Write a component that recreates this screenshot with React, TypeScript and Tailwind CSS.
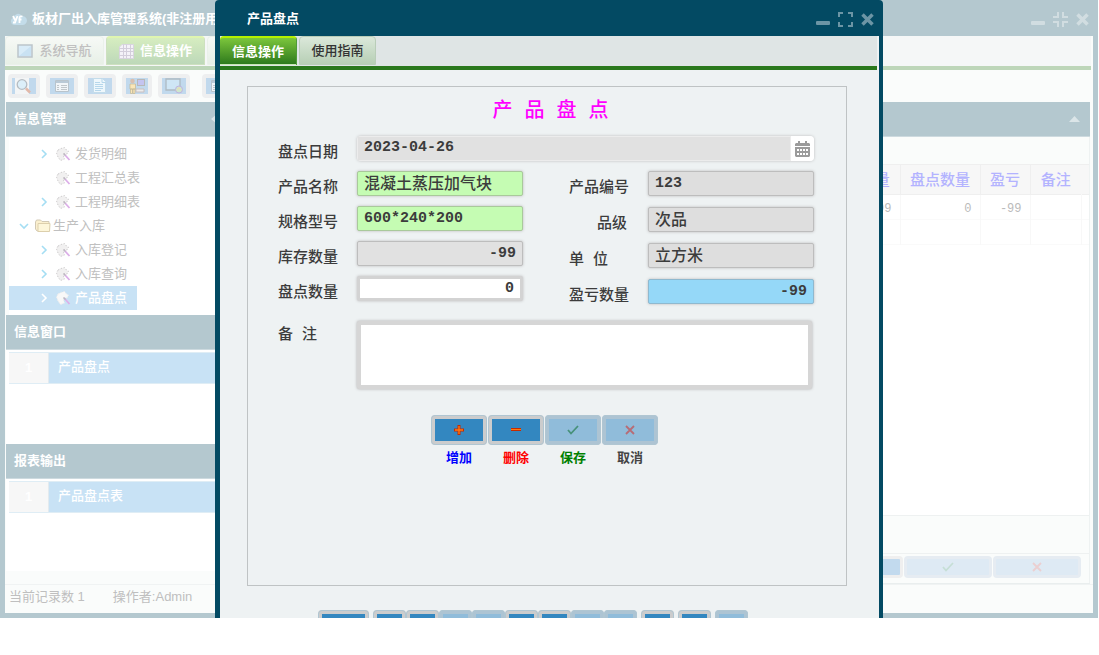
import type { ReactNode } from "react";

interface TreeItem {
  label: string;
  folder?: boolean;
  leaf?: boolean;
  active?: boolean;
}

interface NavButton {
  wide?: boolean;
  muted?: boolean;
  gap?: boolean;
  label: string;
}

const TREE: TreeItem[] = [
  { label: "发货明细" },
  { label: "工程汇总表", leaf: true },
  { label: "工程明细表" },
  { label: "生产入库", folder: true },
  { label: "入库登记" },
  { label: "入库查询" },
  { label: "产品盘点", active: true },
];

const NAV_BUTTONS: NavButton[] = [
  { label: "query", wide: true },
  { label: "first", gap: true },
  { label: "previous" },
  { label: "next", muted: true },
  { label: "last", muted: true },
  { label: "add" },
  { label: "delete" },
  { label: "save", muted: true },
  { label: "cancel", muted: true },
  { label: "print", gap: true },
  { label: "export", gap: true },
  { label: "close", gap: true, muted: true },
];

const SANS = "font-['Liberation_Sans','Noto_Sans_CJK_SC',sans-serif]";
const MONO = "font-['Liberation_Mono','Noto_Sans_CJK_SC',monospace]";

/* ---------- icons ---------- */

function MinimizeIcon() {
  return (
    <svg width="14" height="16" viewBox="0 0 14 16">
      <rect x="0" y="10" width="14" height="4" rx="1" fill="currentColor" />
    </svg>
  );
}

function MaximizeIcon() {
  return (
    <svg width="15" height="15" viewBox="0 0 15 15" fill="none" stroke="currentColor" strokeWidth="2">
      <path d="M1 5V1h4M10 1h4v4M14 10v4h-4M5 14H1v-4" />
    </svg>
  );
}

function RestoreIcon() {
  return (
    <svg width="15" height="15" viewBox="0 0 15 15" fill="none" stroke="currentColor" strokeWidth="2">
      <path d="M0 5h5V0M10 0v5h5M15 10h-5v5M5 15v-5H0" />
    </svg>
  );
}

function CloseIcon() {
  return (
    <svg width="13" height="13" viewBox="0 0 13 13" stroke="currentColor" strokeWidth="3.5">
      <path d="M1.5 1.5l10 10M11.5 1.5l-10 10" />
    </svg>
  );
}

function LogoIcon() {
  return (
    <svg width="17" height="14" viewBox="0 0 17 14">
      <path d="M4 13a4 4 0 0 1-.6-7.6A4.6 4.6 0 0 1 11.8 4 4.5 4.5 0 0 1 13 13z" fill="#c3dce9" />
      <path d="M3 4l2.300 4.500M7.500 4L5 10.500H3M9.500 11V6c0-1.500 1-2 3-1.500M8.500 7.500h3" fill="none" stroke="#fff" strokeWidth="1.8" />
    </svg>
  );
}

function ScreenIcon() {
  return (
    <svg width="16" height="14" viewBox="0 0 16 14">
      <rect x="1" y="1" width="14" height="12" fill="#d9ecf8" stroke="#bcc5ca" strokeWidth="1.5" />
      <path d="M2 12L14 2v10z" fill="#c9e2f3" />
    </svg>
  );
}

function GridIcon() {
  return (
    <svg width="15" height="15" viewBox="0 0 15 15">
      <path d="M3 .5h11.500v14H.5V3z" fill="#f4f2f8" stroke="#d9d5e0" />
      <path d="M.5 4.500h14M.5 7.500h14M.5 11.500h14M4.500 .5v14M7.500 .5v14M11.500 .5v14" stroke="#d3cedb" />
    </svg>
  );
}

function ToolIcon({ kind }: { kind: number }) {
  return (
    <svg width="18" height="16" viewBox="0 0 18 16" fill="none">
      {kind === 0 && (
        <>
          <path d="M0 0h14v16H0z" fill="#f3f5f6" />
          <circle cx="7" cy="6.500" r="4.800" fill="#dceff9" stroke="#b5bcc2" strokeWidth="1.3" />
          <path d="M11 10.500l4 4" stroke="#e2b8a8" strokeWidth="2.5" />
        </>
      )}
      {(kind === 1 || kind === 5) && (
        <>
          <path d="M2.500 2.500h13v11h-13z" fill="#f1f5f8" stroke="#b9c4cc" />
          <path d="M3 4h12" stroke="#b9c9d6" strokeWidth="2" />
          <path d="M4 7.500h2M4 9.500h2M4 11.500h2M8 7.500h6M8 9.500h6M8 11.500h6" stroke="#c0c6ca" />
        </>
      )}
      {kind === 2 && (
        <>
          <path d="M2.500 .5h9l3 3v11h-12z" fill="#eef7fc" stroke="#c3dcea" />
          <path d="M11 .5v4h3.500M4 4.500h5M4 6.500h8M4 8.500h8M4 10.500h8M4 12.500h6" stroke="#b6d7eb" />
        </>
      )}
      {kind === 3 && (
        <>
          <rect x="9.500" y="1.500" width="7" height="6" fill="#c4c4f0" stroke="#b8b8b8" />
          <path d="M8 11h8v3H8z" fill="#ececec" stroke="#c9bfc0" />
          <circle cx="4.500" cy="3" r="2.300" fill="#d8bfb0" />
          <path d="M2 6h5.500v5H2zM2.500 11h2v4.500h-2zM5 11h2v4.500H5z" fill="#fae6b7" stroke="#c3b896" strokeWidth=".7" />
        </>
      )}
      {kind === 4 && (
        <>
          <path d="M1 1h14v11H1z" fill="#cfe6f5" stroke="#aebac2" strokeWidth="1.3" />
          <circle cx="14" cy="11.500" r="3.500" fill="#cce7cf" stroke="#bfb2e0" />
          <path d="M12 12.500l2-3 2 3" stroke="#f0dcae" />
        </>
      )}
    </svg>
  );
}

function Chevron({ down, color }: { down?: boolean; color: string }) {
  return (
    <svg width="12" height="12" viewBox="0 0 12 12" fill="none" stroke={color} strokeWidth="1.6">
      <path d={down ? "M2 4l4 4 4-4" : "M4 2l4 4-4 4"} />
    </svg>
  );
}

function FolderIcon() {
  return (
    <svg width="16" height="14" viewBox="0 0 16 14">
      <path d="M.5 3l1-2h4L7 2.500h7V12H2L.5 10z" fill="#fbf0cf" stroke="#d2c9b4" />
      <path d="M3 4.500h12l-.5 8H3z" fill="#fdf6da" stroke="#dccfac" />
    </svg>
  );
}

function FormIcon({ solid }: { solid?: boolean }) {
  return (
    <svg width="16" height="14" viewBox="0 0 16 14">
      <path
        d="M2 3l3-1.500L8.500 .5l2 2.500 2 1-1.500 3L8 6.500 7.500 9l1 3-4 1.500L2 10 .5 6z"
        fill={solid ? "#f8f8f8" : "#f1f0f0"}
        stroke={solid ? "#ededed" : "#d0cecf"}
        strokeDasharray="1.5 1.5"
      />
      <path d="M9 8l4.500 5" stroke="#dcaee8" strokeWidth="1.8" />
      <path d="M7.500 6.500L9.500 8.500" stroke="#bdb7c0" strokeWidth="1.6" />
    </svg>
  );
}

function CalendarIcon() {
  return (
    <svg width="15" height="16" viewBox="0 0 15 16" fill="#9b9b9b">
      <path d="M3 0h2v2h5V0h2v2h2l1 1v2H0V3l1-1h2zM0 6h15v9l-1 1H1l-1-1z" />
      <path d="M2 8h2v2H2zM5 8h2v2H5zM8 8h2v2H8zM11 8h2v2h-2zM2 12h2v2H2zM5 12h2v2H5zM8 12h2v2H8zM11 12h2v2h-2z" fill="#fff" />
    </svg>
  );
}

function PlusIcon() {
  return (
    <svg width="10" height="10" viewBox="0 0 10 10">
      <path d="M5 0v10M0 5h10" stroke="#c42b00" strokeWidth="3" />
      <path d="M5 1v8M1 5h8" stroke="#ff7a10" strokeWidth="1.3" />
    </svg>
  );
}

function MinusIcon() {
  return (
    <svg width="12" height="4" viewBox="0 0 12 4">
      <rect x="1" width="10" height="3" fill="#c42b00" />
      <path d="M1 1.500h10" stroke="#ff7a10" />
    </svg>
  );
}

function CheckIcon({ color }: { color: string }) {
  return (
    <svg width="12" height="10" viewBox="0 0 12 10" fill="none" stroke={color} strokeWidth="1.8">
      <path d="M1 5l3 3.500L11 1" />
    </svg>
  );
}

function CrossIcon({ color }: { color: string }) {
  return (
    <svg width="10" height="10" viewBox="0 0 10 10" stroke={color} strokeWidth="1.8">
      <path d="M1 1l8 8M9 1L1 9" />
    </svg>
  );
}

/* ---------- background window ---------- */

function PanelHeader({ title, arrow }: { title: string; arrow?: ReactNode }) {
  return (
    <div className="flex h-[35px] items-center justify-between border-b border-[#cddadf] bg-[#b4c8cf] px-2 text-[13px] font-bold text-white">
      <span>{title}</span>
      {arrow}
    </div>
  );
}

function ListRow({ label }: { label: string }) {
  return (
    <div className="mt-[2px] ml-[3px] flex h-8 border-y border-[#dfedf5] text-[13px] font-medium text-white">
      <span className="flex w-10 items-center justify-center border-r border-[#e3eaee] bg-[#f7f7f7] font-bold">1</span>
      <span className="flex-1 bg-[#c8e2f5] px-[9px] leading-7">{label}</span>
    </div>
  );
}

function Sidebar() {
  return (
    <aside className="flex w-[220px] shrink-0 flex-col pb-[13px] pl-px">
      <PanelHeader
        title="信息管理"
        arrow={
          <svg width="6" height="10" viewBox="0 0 6 10" fill="#dbe5e8">
            <path d="M6 0v10L0 5z" />
          </svg>
        }
      />
      <ul className="ml-[3px] h-[178px] bg-white pt-[5px] text-[13px] text-[#c0c0c0]">
        {TREE.map((item) => (
          <li key={item.label} className="h-6">
            <a
              href="#"
              className={`flex h-6 w-fit items-center pr-[10px] ${
                item.folder ? "gap-[2px] pl-[9px]" : "gap-[3px] pl-[29px]"
              } ${item.active ? "bg-[#c8e2f5] font-medium text-white" : ""}`}
            >
              <span className="w-[15px]">
                {!item.leaf && <Chevron down={item.folder} color={item.active ? "#ffffff" : "#a5def3"} />}
              </span>
              {item.folder ? <FolderIcon /> : <FormIcon solid={item.active} />}
              <span>{item.label}</span>
            </a>
          </li>
        ))}
      </ul>
      <PanelHeader title="信息窗口" />
      <div className="h-[94px] bg-white">
        <ListRow label="产品盘点" />
      </div>
      <PanelHeader title="报表输出" />
      <div className="h-[92px] bg-white">
        <ListRow label="产品盘点表" />
      </div>
    </aside>
  );
}

function StockTable() {
  return (
    <table className={`w-full table-fixed border-collapse text-right text-[12px] text-[#bbbbbb] ${MONO}`}>
      <colgroup>
        <col />
        <col className="w-20" />
        <col className="w-20" />
        <col className="w-[50px]" />
        <col className="w-[51px]" />
        <col className="w-2" />
      </colgroup>
      <thead>
        <tr className="h-[30px] border-y border-[#efefef] bg-[#f7f7f7] text-center text-[15px] leading-6 text-[#b3b3ff]">
          <th />
          <th className="border-r border-[#efefef] pt-1 font-medium">库存数量</th>
          <th className="border-r border-[#efefef] pt-1 font-medium">盘点数量</th>
          <th className="border-r border-[#efefef] pt-1 font-medium">盈亏</th>
          <th className="pt-1 font-medium">备注</th>
          <th />
        </tr>
      </thead>
      <tbody>
        <tr className="h-[25px] border-b border-[#fafafa]">
          <td />
          <td className="border-r border-[#f8f8f8] pt-[3px] pr-2">-99</td>
          <td className="border-r border-[#f8f8f8] pt-[3px] pr-2">0</td>
          <td className="border-r border-[#f8f8f8] pt-[3px] pr-2">-99</td>
          <td className="border-r border-[#f8f8f8]" />
          <td />
        </tr>
        <tr className="h-[25px] border-b border-[#fafafa]">
          <td />
          <td className="border-r border-[#f8f8f8]" />
          <td className="border-r border-[#f8f8f8]" />
          <td className="border-r border-[#f8f8f8]" />
          <td className="border-r border-[#f8f8f8]" />
          <td />
        </tr>
      </tbody>
    </table>
  );
}

function MainPanel() {
  return (
    <section className="mr-[3px] flex min-w-0 flex-1 flex-col border-b border-[#e9eeee]">
      <PanelHeader
        title=""
        arrow={
          <svg className="mr-[2px]" width="11" height="6" viewBox="0 0 11 6" fill="#dbe5e8">
            <path d="M0 6h11L5.500 0z" />
          </svg>
        }
      />
      <div className="flex flex-1 flex-col border-r border-[#eef2f2] pt-[27px]">
        <div className="flex-1 bg-white">
          <StockTable />
        </div>
        <div className="h-[39px] border-y border-[#eef1f1]" />
        <div className="flex h-[29px] justify-end gap-px pt-[2px] pr-2">
          <button aria-label="删除" className="h-[22px] w-[88px] rounded border-[3px] border-[#efefef] bg-[#c2daee]" />
          <button aria-label="保存" className="flex h-[22px] w-[88px] items-center justify-center rounded border-[3px] border-[#e6ecf2] bg-[#deeaf4]">
            <CheckIcon color="#c6dfd6" />
          </button>
          <button aria-label="取消" className="flex h-[22px] w-[88px] items-center justify-center rounded border-[3px] border-[#e6ecf2] bg-[#deeaf4]">
            <CrossIcon color="#ebcfd1" />
          </button>
        </div>
      </div>
    </section>
  );
}

function MainWindow() {
  return (
    <div className="mr-px border-x-[5px] border-b-[5px] border-[#b4c8cf] bg-[#fafcfb]">
      <header className="flex h-9 items-center justify-between bg-[#b4c8cf] pt-[2px] pr-1 pl-[5px] text-[#d1dde1]">
        <div className="flex items-center gap-[5px] text-[13px] font-bold text-white">
          <LogoIcon />
          <h1>板材厂出入库管理系统(非注册用户)</h1>
        </div>
        <div className="flex items-center gap-2">
          <button aria-label="最小化"><MinimizeIcon /></button>
          <button aria-label="还原"><RestoreIcon /></button>
          <button aria-label="关闭"><CloseIcon /></button>
        </div>
      </header>
      <div className="mr-[2px] flex h-[34px] gap-[2px] border-b-4 border-[#bdd6b9] bg-[#f5f7f7] text-[13px] font-medium">
        <button className="flex h-[29px] w-[99px] items-center justify-center gap-[6px] rounded-t border border-[#eaf1ea] bg-linear-to-b from-[#f6f9f6] to-[#e8f0e7] text-[#c0c0c0]">
          <ScreenIcon />
          系统导航
        </button>
        <button className="flex h-[29px] w-[99px] items-center justify-center gap-[6px] rounded-t border border-t-2 border-[#cde0bf] border-t-[#dff5b0] bg-linear-to-b from-[#d6edc0] to-[#bdd8b9] font-bold text-white">
          <GridIcon />
          信息操作
        </button>
        <button aria-label="使用指南" className="h-[29px] w-[99px] rounded-t border border-[#eaf1ea] bg-linear-to-b from-[#f6f9f6] to-[#e8f0e7]" />
      </div>
      <div className="flex h-8 gap-[6px] pt-1 pl-[3px]">
        {[0, 1, 2, 3, 4, 5].map((kind) => (
          <button
            key={kind}
            aria-label={`工具 ${kind + 1}`}
            className={`flex h-6 items-center justify-center rounded border-4 border-[#eeeff0] bg-[#c1d9ed] ${
              kind === 3 ? "w-[30px]" : "w-8"
            } ${kind === 5 ? "ml-[6px]" : ""}`}
          >
            <ToolIcon kind={kind} />
          </button>
        ))}
      </div>
      <div className="flex">
        <Sidebar />
        <MainPanel />
      </div>
      <footer className="flex h-[29px] items-center gap-7 border-t border-[#f0f3f3] px-1 pb-1 text-[13px] text-[#bfbfbf]">
        <span>当前记录数 1</span>
        <span>操作者:Admin</span>
      </footer>
    </div>
  );
}

/* ---------- dialog ---------- */

interface FieldProps {
  id: string;
  label: string;
  value: string;
  look: string;
  pad?: string;
}

function Field({ id, label, value, look, pad = "" }: FieldProps) {
  return (
    <div className="flex h-[25px]">
      <label htmlFor={id} className={`w-[79px] shrink-0 pt-[6px] text-[15px] leading-6 ${pad}`}>
        {label}
      </label>
      <input
        id={id}
        defaultValue={value}
        className={`h-[25px] w-[166px] rounded-xs px-[6px] shadow-[0_0_3px_#bbb] outline-none ${look}`}
      />
    </div>
  );
}

function ActionButton({ label, color, muted, children }: { label: string; color: string; muted?: boolean; children: ReactNode }) {
  return (
    <button type="button" className="flex w-14 flex-col items-center text-[13px] font-bold">
      <span
        className={`flex h-[30px] w-14 items-center justify-center rounded border-4 outline-1 -outline-offset-1 outline-[#b0c6d2] ${
          muted ? "border-[#adc4d3] bg-[#90bcda]" : "border-[#cbcccd] bg-[#3387c0]"
        }`}
      >
        {children}
      </span>
      <span className={`pt-1 leading-5 ${color}`}>{label}</span>
    </button>
  );
}

function CheckDialog() {
  return (
    <div role="dialog" aria-label="产品盘点" className="h-fit w-[668px] max-w-full rounded-t bg-[#034a63] pr-1 pl-[5px]">
      <header className="flex h-9 items-center justify-between pt-[2px] pr-[5px] pl-[27px] text-[#6c95a5]">
        <h2 className="text-[13px] font-bold text-white">产品盘点</h2>
        <div className="flex items-center gap-2">
          <button aria-label="最小化"><MinimizeIcon /></button>
          <button aria-label="最大化"><MaximizeIcon /></button>
          <button aria-label="关闭"><CloseIcon /></button>
        </div>
      </header>
      <div className="bg-[#eef2f3]">
        <div className="mr-[2px] flex h-[34px] gap-[2px] border-b-4 border-[#2a781c] bg-[#dfe5e5] text-[13px]">
          <button className="h-[29px] w-[77px] rounded-t border-t-2 border-r border-t-[#b4f000] border-r-[#4f9b38] bg-linear-to-b from-[#7cc63c] to-[#2a781c] font-bold text-white shadow-[inset_0_-1px_0_#c8e6b4]">
            信息操作
          </button>
          <button className="h-[29px] w-[77px] rounded-t border border-[#b9cdb8] bg-linear-to-b from-[#dbe8da] to-[#b7cfb5] font-medium text-[#333]">
            使用指南
          </button>
        </div>

        <form className={`mx-[27px] mt-4 h-[500px] w-[600px] max-w-full border border-[#bfc3c4] px-[30px] font-medium text-[#3c3c3c] ${MONO}`}>
          <h3 className="pt-[10px] pl-[7px] text-center text-[20px] leading-[30px] text-[#ff00ff]">产 品 盘 点</h3>

          <div className="mt-[9px] flex h-[25px]">
            <label htmlFor="date" className="w-[79px] shrink-0 pt-[6px] text-[15px] leading-6">盘点日期</label>
            <div className="flex w-[457px] overflow-hidden rounded shadow-[0_0_3px_#bbb]">
              <input id="date" defaultValue="2023-04-26" className="min-w-0 flex-1 border border-[#ececec] bg-[#e1e1e1] px-[6px] text-[15px] font-bold outline-none" />
              <button type="button" aria-label="选择日期" className="flex w-[23px] items-center justify-center bg-white">
                <CalendarIcon />
              </button>
            </div>
          </div>

          <div className="mt-[10px] flex gap-[46px]">
            <div className="flex flex-col gap-[10px]">
              <Field id="name" label="产品名称" value="混凝土蒸压加气块" look="border border-[#a9c99b] bg-[#c5fcb3] pb-1 text-[16px]" />
              <Field id="spec" label="规格型号" value="600*240*200" look="border border-[#a9c99b] bg-[#c5fcb3] text-[15px] font-bold" />
              <Field id="stock" label="库存数量" value="-99" look="border border-[#bdbdbd] bg-[#e1e1e1] text-right text-[15px] font-bold" />
              <Field id="count" label="盘点数量" value="0" look="border-[3px] border-[#d3d3d3] bg-white text-right text-[15px] font-bold" />
            </div>
            <div className="flex flex-col gap-[11px]">
              <Field id="code" label="产品编号" value="123" look="border border-[#bdbdbd] bg-[#dedede] text-[15px] font-bold" />
              <Field id="grade" label="品级" pad="pl-7" value="次品" look="border border-[#bdbdbd] bg-[#dedede] pb-1 text-[16px]" />
              <Field id="unit" label="单 位" value="立方米" look="border border-[#bdbdbd] bg-[#dedede] pb-1 text-[16px]" />
              <Field id="diff" label="盈亏数量" value="-99" look="border border-[#8fb9cf] bg-[#95d8f8] text-right text-[15px] font-bold" />
            </div>
          </div>

          <div className="mt-[17px] flex">
            <label htmlFor="remark" className="w-[79px] shrink-0 pt-[3px] text-[15px] leading-6">备 注</label>
            <textarea
              id="remark"
              className="h-[68px] w-[455px] resize-none rounded-xs border-4 border-[#d6d6d6] bg-white shadow-[0_0_3px_#aaa] outline-none"
            />
          </div>

          <div className="mt-[26px] flex justify-center gap-px pr-[5px]">
            <ActionButton label="增加" color="text-[#0000ff]">
              <PlusIcon />
            </ActionButton>
            <ActionButton label="删除" color="text-[#ff0000]">
              <MinusIcon />
            </ActionButton>
            <ActionButton label="保存" color="text-[#008000]" muted>
              <CheckIcon color="#479179" />
            </ActionButton>
            <ActionButton label="取消" color="text-[#444]" muted>
              <CrossIcon color="#b76c76" />
            </ActionButton>
          </div>
        </form>

        <div className="mt-6 flex pb-3 pl-[98px]">
          {NAV_BUTTONS.map((b) => (
            <button
              key={b.label}
              aria-label={b.label}
              className={`h-[30px] rounded border-4 outline-1 -outline-offset-1 outline-[#b0c6d2] ${b.wide ? "w-[51px]" : "w-[33px]"} ${
                b.gap ? "ml-1" : ""
              } ${b.muted ? "border-[#adc4d3] bg-[#90bcda]" : "border-[#cbcccd] bg-[#3387c0]"}`}
            />
          ))}
        </div>
      </div>
    </div>
  );
}

export default function App() {
  return (
    <div className={`relative bg-white ${SANS}`}>
      <MainWindow />
      <div className="absolute top-0 right-px -bottom-px left-0 flex justify-center overflow-hidden">
        <CheckDialog />
      </div>
    </div>
  );
}
